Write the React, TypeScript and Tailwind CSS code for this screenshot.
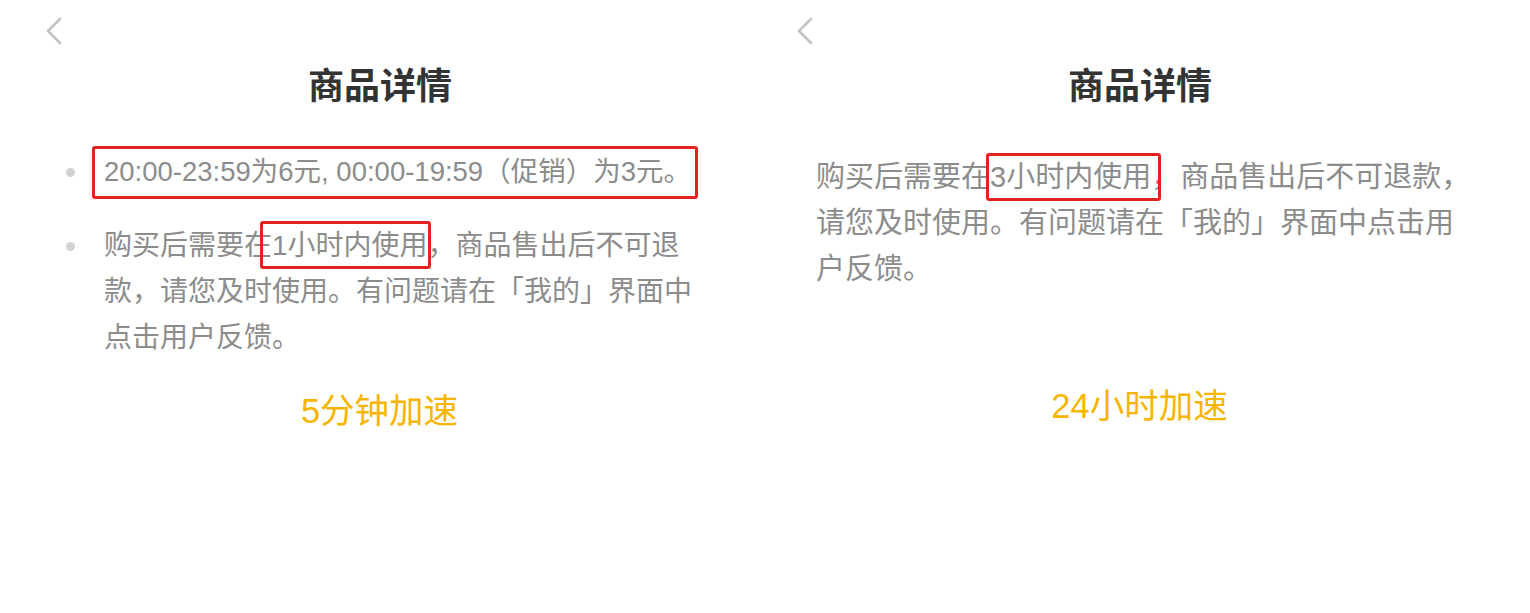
import React from 'react'

const FONT = { fontFamily: '"Liberation Sans", "Noto Sans CJK SC", sans-serif' }

function Back() {
  return (
    <svg width="18" height="28" viewBox="0 0 18 28" className="ml-[45px] mt-[17px] block">
      <path d="M15 2 L3 14 L15 26" fill="none" stroke="#c4c4c4" strokeWidth="2.8" strokeLinecap="round" strokeLinejoin="round" />
    </svg>
  )
}

function Boxed({ children, className }: { children: React.ReactNode; className: string }) {
  return (
    <span className="relative">
      {children}
      <span className={`absolute border-[3px] border-[#e3231f] rounded-[3px] pointer-events-none ${className}`} />
    </span>
  )
}

export default function App() {
  return (
    <div className="flex w-[1530px] h-[613px] bg-white overflow-hidden" style={FONT}>
      {/* left: 5 min */}
      <section className="w-[751px] shrink-0 flex flex-col">
        <Back />
        <h1 className="ml-[308px] mt-[20px] text-[36px] leading-[44px] font-bold text-[#333333]">商品详情</h1>
        <ul className="mt-[40px] flex flex-col gap-[28px] text-[28px] leading-[46px] text-[#8c8c8c]">
          <li className="flex items-start">
            <span className="mt-[19px] ml-[66px] w-[9px] h-[9px] rounded-full bg-[#d2d2d2] shrink-0" />
            <span className="ml-[29px] whitespace-nowrap text-[27.5px]">
              <Boxed className="-left-[12px] -right-[7px] -top-[10px] -bottom-[12px]">
                20:00-23:59为6元, 00:00-19:59（促销）为3元。
              </Boxed>
            </span>
          </li>
          <li className="flex items-start">
            <span className="mt-[19px] ml-[66px] w-[9px] h-[9px] rounded-full bg-[#d2d2d2] shrink-0" />
            <span className="ml-[29px] whitespace-nowrap">
              购买后需要在
              <Boxed className="-left-[12px] -right-[3px] -top-[9px] -bottom-[8px]">1小时内使用</Boxed>
              ，商品售出后不可退
              <br />
              款，请您及时使用。有问题请在「我的」界面中
              <br />
              点击用户反馈。
            </span>
          </li>
        </ul>
        <p className="mt-[28px] text-center pl-[8px] text-[34.5px] leading-[44px] text-[#f7b500]">5分钟加速</p>
      </section>

      {/* right: 24 h */}
      <section className="w-[779px] shrink-0 flex flex-col">
        <Back />
        <h1 className="ml-[317px] mt-[20px] text-[36px] leading-[44px] font-bold text-[#333333]">商品详情</h1>
        <p className="mt-[45px] ml-[65px] text-[29px] leading-[46px] text-[#8c8c8c] whitespace-nowrap">
          购买后需要在
          <Boxed className="-left-[4px] -right-[10px] -top-[8px] -bottom-[8px]">3小时内使用</Boxed>
          ，商品售出后不可退款，
          <br />
          请您及时使用。有问题请在「我的」界面中点击用
          <br />
          户反馈。
        </p>
        <p className="mt-[92px] text-center pr-[2px] text-[34.5px] leading-[44px] text-[#f7b500]">24小时加速</p>
      </section>
    </div>
  )
}
